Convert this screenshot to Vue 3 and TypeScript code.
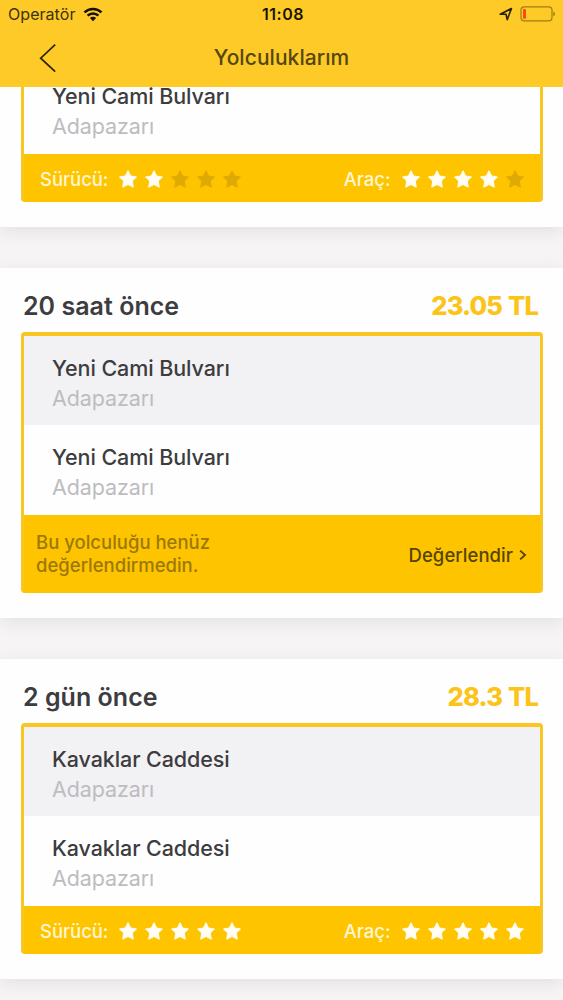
<script setup lang="ts">
interface Stop {
  street: string
  district: string
}

interface Rating {
  label: string
  score: number
}

interface Trip {
  id: number
  when?: string
  price?: string
  stops: Stop[]
  ratings: Rating[]
}

const trips: Trip[] = [
  {
    id: 1,
    stops: [{ street: 'Yeni Cami Bulvarı', district: 'Adapazarı' }],
    ratings: [
      { label: 'Sürücü:', score: 2 },
      { label: 'Araç:', score: 4 },
    ],
  },
  {
    id: 2,
    when: '20 saat önce',
    price: '23.05 TL',
    stops: [
      { street: 'Yeni Cami Bulvarı', district: 'Adapazarı' },
      { street: 'Yeni Cami Bulvarı', district: 'Adapazarı' },
    ],
    ratings: [],
  },
  {
    id: 3,
    when: '2 gün önce',
    price: '28.3 TL',
    stops: [
      { street: 'Kavaklar Caddesi', district: 'Adapazarı' },
      { street: 'Kavaklar Caddesi', district: 'Adapazarı' },
    ],
    ratings: [
      { label: 'Sürücü:', score: 5 },
      { label: 'Araç:', score: 5 },
    ],
  },
]
</script>

<template>
  <div class="screen">
    <header class="header">
      <div class="status">
        <div class="carrier">
          <span class="operator">Operatör</span>
          <svg class="wifi" width="20" height="15" viewBox="0 0 20 15">
            <g fill="none" stroke="#171200" stroke-width="2.5">
              <path d="M1.5 5.4A12.2 12.2 0 0 1 18.5 5.4" />
              <path d="M4.6 8.7A7.8 7.8 0 0 1 15.4 8.7" />
            </g>
            <path fill="#171200" d="M6.9 11A4.4 4.4 0 0 1 13.1 11L10 14.2Z" />
          </svg>
        </div>
        <span class="time">11:08</span>
        <div class="indicators">
          <svg width="14" height="14" viewBox="0 0 14 14">
            <path d="M1.2 7.2L12.5 1.5L8.2 12.6L7 7.3Z" fill="none" stroke="#2b2000" stroke-width="1.6" stroke-linejoin="round" />
          </svg>
          <svg width="36" height="16" viewBox="0 0 36 16">
            <rect x="1" y="0.9" width="31" height="14" rx="3.4" fill="none" stroke="#a17d13" stroke-width="1.2" />
            <rect x="3" y="3" width="3" height="9.8" rx="0.8" fill="#fb4a13" />
            <path d="M33.4 5.6Q35 6.2 35 7.9T33.4 10.2Z" fill="#a17d13" />
          </svg>
        </div>
      </div>
      <div class="nav">
        <svg class="back" width="18" height="30" viewBox="0 0 18 30">
          <path d="M16.2 1.7L1.7 15.2L16.2 28.7" fill="none" stroke="#2c2405" stroke-width="1.7" />
        </svg>
        <h1 class="title">Yolculuklarım</h1>
      </div>
    </header>

    <main class="list">
      <section v-for="trip in trips" :key="trip.id" class="trip" :class="{ partial: !trip.when }">
        <div v-if="trip.when" class="heading">
          <h2 class="when">{{ trip.when }}</h2>
          <span class="price">{{ trip.price }}</span>
        </div>
        <div class="box">
          <div v-for="(stop, i) in trip.stops" :key="i" class="stop">
            <div class="street">{{ stop.street }}</div>
            <div class="district">{{ stop.district }}</div>
          </div>
          <div v-if="trip.ratings.length" class="ratings">
            <div v-for="rating in trip.ratings" :key="rating.label" class="rating">
              <span class="label">{{ rating.label }}</span>
              <div class="stars">
                <svg v-for="n in 5" :key="n" class="star" :class="{ off: n > rating.score }" width="18" height="18" viewBox="0 0 18 18">
                  <path d="M9 0.7L11.6 6L17.5 6.9L13.3 11.1L14.3 17.2L9 14.5L3.7 17.2L4.7 11.1L0.5 6.9L6.4 6Z" stroke-width="1" stroke-linejoin="round" />
                </svg>
              </div>
            </div>
          </div>
          <div v-else class="pending">
            <p class="note">Bu yolculuğu henüz<br />değerlendirmedin.</p>
            <div class="rate">
              <span class="action">Değerlendir</span>
              <svg width="8" height="12" viewBox="0 0 8 12">
                <path d="M1.2 1.6L6 6L1.2 10.4" fill="none" stroke="#554500" stroke-width="1.9" />
              </svg>
            </div>
          </div>
        </div>
      </section>
    </main>
  </div>
</template>

<style>
body {
  margin: 0;
}
</style>

<style scoped>
.screen {
  width: 563px;
  height: 1000px;
  overflow: hidden;
  display: flex;
  flex-direction: column;
  background: #f7f4f5;
  font-family: Inter, "Liberation Sans", sans-serif;
  color: #3d3c3f;
  white-space: nowrap;
}
.header {
  height: 87px;
  flex: none;
  background: #fdca27;
}
.status {
  height: 28px;
  display: grid;
  grid-template-columns: 1fr auto 1fr;
  align-items: center;
  padding: 0 7px 0 8px;
  color: #1b1500;
}
.carrier {
  display: flex;
  align-items: center;
  gap: 8px;
}
.operator {
  font-size: 16px;
  letter-spacing: 0.05px;
  color: #40330a;
}
.time {
  font-size: 16px;
  font-weight: 600;
  letter-spacing: 0.5px;
  padding-left: 2px;
}
.indicators {
  display: flex;
  justify-content: flex-end;
  align-items: center;
  gap: 7px;
}
.nav {
  height: 58px;
  display: grid;
  grid-template-columns: 60px 1fr 60px;
  align-items: center;
}
.back {
  margin-left: 39px;
}
.title {
  margin: 0;
  text-align: center;
  font-size: 21px;
  line-height: 60px;
  font-weight: 500;
  letter-spacing: 0.05px;
  color: #55470f;
}
.list {
  flex: 1;
  overflow: hidden;
  display: flex;
  flex-direction: column;
  gap: 41px;
}
.trip {
  flex: none;
  padding: 0 21px 25px 21px;
  background: #fefefe;
  box-shadow: 0 4px 16px rgba(70, 75, 70, 0.11);
}
.trip.partial {
  margin-top: -27px;
}
.heading {
  height: 64px;
  padding: 0 4px 0 2px;
  display: flex;
  justify-content: space-between;
  align-items: flex-start;
}
.when,
.price {
  margin: 0;
  font-size: 25px;
  line-height: 30px;
  padding-top: 23px;
}
.when {
  font-weight: 600;
  letter-spacing: 0.03px;
}
.price {
  font-weight: 800;
  font-size: 25.5px;
  letter-spacing: -0.8px;
  word-spacing: 1px;
  color: #fcc419;
}
.box {
  border: solid #f9c522;
  border-width: 4px 3px 0;
  border-radius: 4px;
  background: #ffc400;
  margin-right: -0.5px;
  overflow: hidden;
}
.stop {
  height: 89.5px;
  box-sizing: border-box;
  padding: 17px 0 0 28px;
  background: #f2f1f4;
}
.stop:nth-child(2),
.partial .stop {
  background: #fefefe;
}
.street,
.district {
  line-height: 30px;
  font-size: 21.5px;
}
.street {
  font-weight: 500;
  letter-spacing: -0.08px;
}
.district {
  color: #bdbcc0;
  letter-spacing: -0.1px;
}
.ratings {
  height: 48px;
  display: flex;
  justify-content: space-between;
  align-items: center;
  padding: 2px 16px 0 16px;
  box-sizing: border-box;
}
.rating {
  display: flex;
  align-items: center;
  gap: 11px;
}
.label {
  color: #fff6d4;
  font-size: 18.5px;
  font-weight: 500;
  letter-spacing: -0.05px;
}
.stars {
  display: flex;
  gap: 8px;
}
.star {
  display: block;
  fill: #fffdf4;
  stroke: #fffdf4;
}
.star.off {
  fill: #dfaa04;
  stroke: #dfaa04;
}
.pending {
  height: 78px;
  display: flex;
  justify-content: space-between;
  align-items: center;
  padding: 0 12.5px 0 12px;
}
.note {
  margin: 0;
  font-size: 18.5px;
  font-weight: 500;
  line-height: 23px;
  color: #9b7807;
}
.rate {
  display: flex;
  align-items: center;
  gap: 6px;
  padding-top: 2px;
  color: #554500;
}
.action {
  font-size: 18.5px;
  font-weight: 500;
  letter-spacing: 0.05px;
}
</style>
